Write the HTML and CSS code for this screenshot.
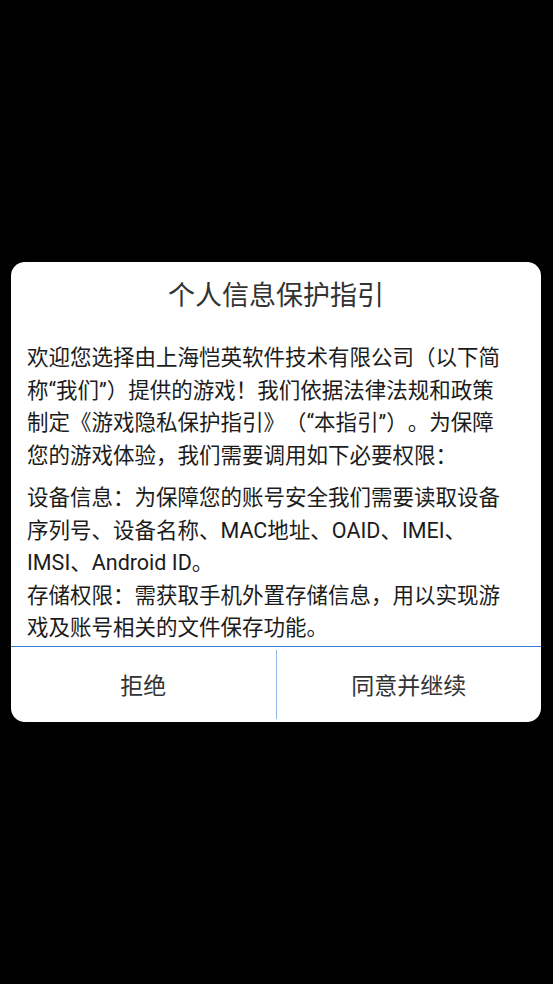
FILE: index.html
```html
<html lang="zh-CN">

<head>
    <meta charset="UTF-8">
    <meta name="viewport" content="width=device-width, initial-scale=1.0">
    <title>个人信息保护指引</title>

    <link rel="stylesheet" href="styles.css">
</head>

<body>
    <div class="dialog">
        <div class="title">个人信息保护指引</div>
        <div class="content">
            <p>欢迎您选择由上海恺英软件技术有限公司（以下简称“我们”）提供的游戏！我们依据法律法规和政策制定《游戏隐私保护指引》（“本指引”）。为保障您的游戏体验，我们需要调用如下必要权限：</p>
            <p class="perm">设备信息：为保障您的账号安全我们需要读取设备序列号、设备名称、MAC地址、OAID、IMEI、IMSI、Android ID。</p>
            <p>存储权限：需获取手机外置存储信息，用以实现游戏及账号相关的文件保存功能。</p>
        </div>
        <div class="buttons">
            <button id="refuse" type="button">拒绝</button>
            <button id="agree" type="button">同意并继续</button>
        </div>
    </div>
</body>

</html>
```

FILE: styles.css
```css
* {
    box-sizing: border-box;
    margin: 0;
    padding: 0;
}

html,
body {
    height: 100%;
}

body {
    background: #000;
    display: flex;
    align-items: center;
    font-family: Roboto, "Noto Sans CJK SC", sans-serif;
    text-spacing-trim: space-all;
}

.dialog {
    width: 530px;
    margin-left: 11px;
    background: #fff;
    border-radius: 14px;
    overflow: hidden;
}

.title {
    padding-top: 14px;
    height: 54px;
    line-height: 40px;
    font-size: 27px;
    color: #333;
    text-align: center;
}

.content {
    padding: 26px 36px 1px 16px;
    font-size: 21.5px;
    line-height: 32.5px;
    color: #1c1c1c;
}

.content .perm {
    margin-top: 10px;
}

.buttons {
    display: flex;
    height: 76px;
    border-top: 1px solid #3a7bd5;
}

.buttons>button {
    flex: 1;
    border: 0;
    background: none;
    font-family: inherit;
    font-size: 23px;
    color: #333;
}

.buttons>button:first-child {
    border-right: 1px solid #8fb4e8;
    margin: 3px 0;
}
```
